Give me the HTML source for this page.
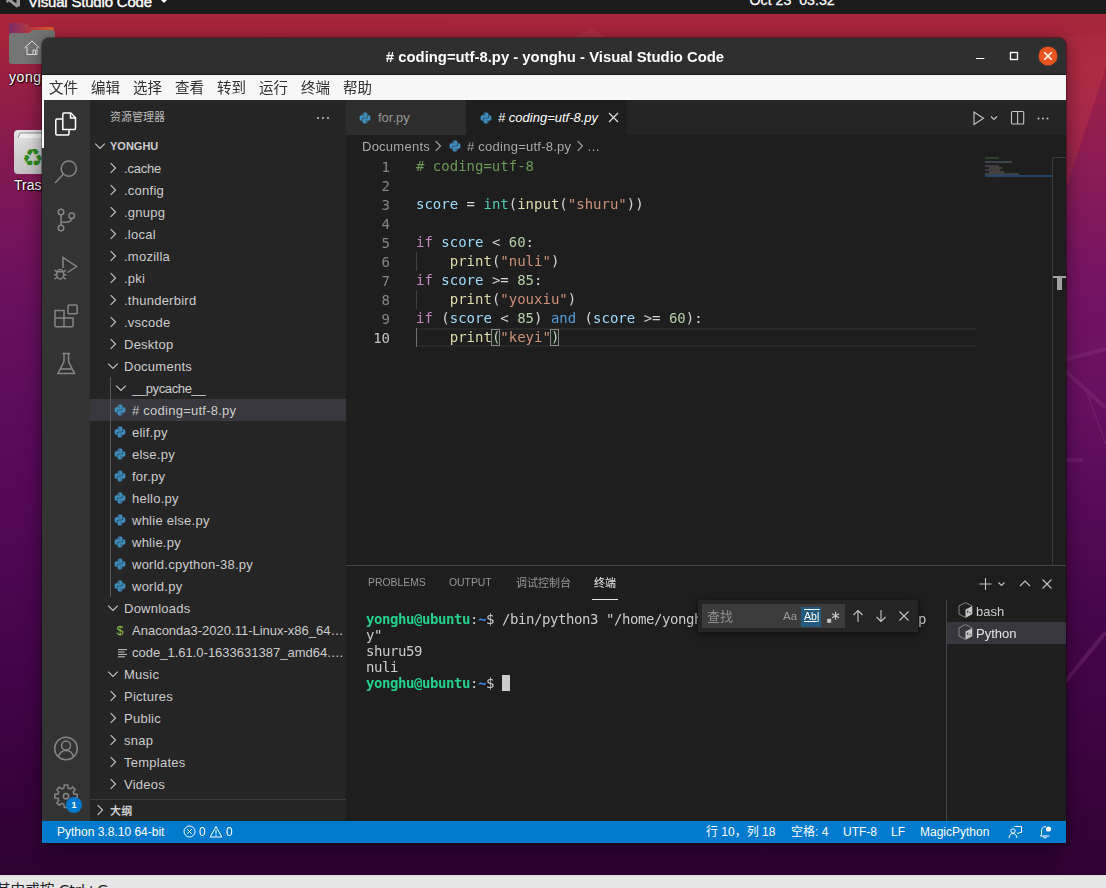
<!DOCTYPE html>
<html lang="zh-CN">
<head>
<meta charset="utf-8">
<title># coding=utf-8.py - yonghu - Visual Studio Code</title>
<style>
*{box-sizing:border-box;margin:0;padding:0}
html,body{width:1106px;height:888px;overflow:hidden}
body{position:relative;font-family:"Liberation Sans","Noto Sans CJK SC",sans-serif;font-size:13px;color:#ccc;background:#5a0f50}
.abs,.abs>*{position:absolute}
svg{display:block;overflow:visible}
#wall{left:0;top:0;width:1106px;height:888px}
#topbar{left:0;top:0;width:1106px;height:14px;background:#1b1b1b;color:#fff;overflow:hidden}
#topbar span{position:absolute;font-weight:normal;font-size:15px;line-height:18px;white-space:nowrap;letter-spacing:-.190px;-webkit-text-stroke:.350px #fff}
#botbar{left:0;top:875px;width:1106px;height:13px;background:#e6e6e7;border-top:1px solid #dcdcdc;overflow:hidden;color:#222}
#botbar span{position:absolute;left:-4px;top:4.500px;font-size:14.600px;line-height:18px;white-space:nowrap;font-family:"DejaVu Sans","Noto Sans CJK SC",sans-serif}
.dlabel{color:#fff;font-size:14px;line-height:18px;text-shadow:1px 1px 1px #000,0 0 2px #000;white-space:nowrap}
#win{left:42px;top:38px;width:1024px;height:805px;background:#1e1e1e;border-radius:7px 7px 0 0;overflow:hidden}
#winshadow{left:42px;top:38px;width:1024px;height:805px;border-radius:7px 7px 0 0;box-shadow:0 3px 18px rgba(0,0,0,.5),0 0 0 1px rgba(0,0,0,.3)}
#title{will-change:transform;left:0;top:0;width:1024px;height:37px;background:#302f30;color:#fff;font-weight:bold;font-size:14.850px;line-height:37px;text-align:center;border-bottom:1px solid #1a1a1a}
#title span{left:1px;width:1024px;top:1px;letter-spacing:0}
#menu{will-change:transform;left:0;top:37px;width:1024px;height:25px;background:#f7f7f7;color:#303030;font-size:14.500px;line-height:25px;white-space:nowrap}
#menu span{top:1px}
#act{left:0;top:62px;width:48px;height:721px;background:#333}
#side{left:48px;top:62px;width:256px;height:721px;background:#252526;overflow:hidden;white-space:nowrap}
.row{left:0;width:256px;height:22px;line-height:22px;color:#ccc;font-size:13px}
.row .t{top:1px;letter-spacing:.250px}
.row .chv{top:3px}
.row .pyi{top:5px}
.sel{background:#37373d}
#tabs{left:304px;top:62px;width:720px;height:35px;background:#252526;white-space:nowrap}
#crumbs{left:304px;top:97px;width:720px;height:22px;background:#1e1e1e;color:#a9a9a9;white-space:nowrap;line-height:22px;letter-spacing:.250px}
#editor{left:304px;top:119px;width:720px;height:408px;background:#1e1e1e;overflow:hidden}
.ln{left:0;width:44px;text-align:right;color:#858585;font:14px/19px "DejaVu Sans Mono","Liberation Mono",monospace}
.cl{left:70px;white-space:pre;color:#d4d4d4;font:14px/19px "DejaVu Sans Mono","Liberation Mono",monospace}
.k{color:#c586c0}.v{color:#9cdcfe}.f{color:#dcdcaa}.s{color:#ce9178}.n{color:#b5cea8}.c{color:#6a9955}.b{color:#569cd6}.ty{color:#4ec9b0}
#panel{left:304px;top:527px;width:720px;height:256px;background:#1e1e1e;border-top:1px solid #454545;overflow:hidden}
.pt{top:7px;font-size:11px;line-height:20px;color:#969696;white-space:nowrap}
.tl{left:20px;white-space:pre;color:#ccc;font:14px/16px "DejaVu Sans Mono","Liberation Mono",monospace;letter-spacing:-0.430px}
.tl b{color:#23d18b}.tl i{color:#3b8eea;font-style:normal;font-weight:bold}
#status{left:0;top:783px;width:1024px;height:22px;background:#007acc;color:#fff;font-size:12px;line-height:22px;white-space:nowrap}
#status span{top:0}
</style>
</head>
<body>
<svg id="wall" class="abs" viewBox="0 0 1106 888" width="1106" height="888">
<defs>
<linearGradient id="gl" x1="0" y1="0" x2="0" y2="1">
<stop offset="0" stop-color="#a8253a"/><stop offset=".04" stop-color="#a5243b"/><stop offset=".1" stop-color="#961e44"/><stop offset=".147" stop-color="#8a1b4c"/><stop offset=".242" stop-color="#78155a"/><stop offset=".355" stop-color="#66105e"/><stop offset=".507" stop-color="#590a5b"/><stop offset=".743" stop-color="#45044b"/><stop offset=".88" stop-color="#38023c"/><stop offset=".985" stop-color="#2c0230"/>
</linearGradient>
<linearGradient id="gr" x1="0" y1="0" x2="0" y2="1">
<stop offset=".016" stop-color="#a6263a"/><stop offset=".045" stop-color="#a8273c"/><stop offset=".075" stop-color="#9c2146"/><stop offset=".124" stop-color="#931e4e"/><stop offset=".18" stop-color="#8a1c56"/><stop offset=".236" stop-color="#80185c"/><stop offset=".293" stop-color="#761462"/><stop offset=".36" stop-color="#6f1264"/><stop offset=".45" stop-color="#661060"/><stop offset=".563" stop-color="#560b58"/><stop offset=".676" stop-color="#48064c"/><stop offset=".79" stop-color="#400444"/><stop offset=".9" stop-color="#38033a"/><stop offset=".985" stop-color="#2f0232"/>
</linearGradient>
<linearGradient id="gp" gradientUnits="userSpaceOnUse" x1="0" y1="40" x2="0" y2="190">
<stop offset="0" stop-color="#ab293e"/><stop offset=".2" stop-color="#ae2b44"/><stop offset=".5" stop-color="#a72949"/><stop offset="1" stop-color="#982350"/>
</linearGradient>
<linearGradient id="gt" x1="0" y1="0" x2="1" y2="0">
<stop offset="0" stop-color="#a8253a"/><stop offset="1" stop-color="#a8263b"/>
</linearGradient>
</defs>
<rect width="1106" height="888" fill="url(#gl)"/>
<rect x="0" y="0" width="1106" height="40" fill="url(#gt)"/>
<path d="M572 40 591 27 610 40z" fill="#b4384c" opacity=".45"/>
<rect x="1060" y="14" width="46" height="874" fill="url(#gr)"/>
<path d="M1060 36h46v31L1060 208z" fill="url(#gp)"/>
<g stroke="#8a3a86" stroke-opacity=".32" fill="none"><path d="M1060 361 1106 349" stroke-width="4"/><path d="M1060 366 1106 408" stroke-width="4"/><path d="M1085 388 1106 444" stroke-width="1.500"/><path d="M1060 460h23" stroke-width="4"/><path d="M1060 688 1106 632" stroke-width="4" stroke-opacity=".35"/></g>
</svg>
<div id="topbar" class="abs"><svg style="position:absolute;left:6px;top:-7px" width="15" height="15" viewBox="0 0 15 15"><path d="M10.500 0.500 14 2v11l-3.500 1.500L3 8.500 1.200 10 0.300 9.300V5.700L1.200 5 3 6.500zM10.500 4.500 6.200 7.500l4.300 3z" fill="#9a9a9a" fill-rule="evenodd"/></svg><span style="left:28px;top:-7px">Visual Studio Code</span><svg style="position:absolute;left:161px;top:0" width="6" height="3" viewBox="0 0 6 3"><path d="M0 0h6L3 3z" fill="#fff"/></svg><span style="left:749.500px;top:-9px;font-weight:normal;font-size:14.200px;letter-spacing:0;-webkit-text-stroke:.250px #fff;white-space:pre">Oct 23  03:32</span></div>
<div class="abs" id="desk" style="left:0;top:14px;width:60px;height:200px">
<svg style="left:9px;top:9px" width="46" height="42" viewBox="0 0 46 42">
<defs><linearGradient id="fg" x1="0" y1="0" x2="1" y2="0"><stop offset="0" stop-color="#7a2a6a"/><stop offset=".5" stop-color="#b8383c"/><stop offset="1" stop-color="#e2622a"/></linearGradient></defs>
<path d="M3 0h14l4 4h21a3 3 0 0 1 3 3v10H0V3a3 3 0 0 1 3-3z" fill="url(#fg)"/>
<path d="M3 10h17l4-3h19a3 3 0 0 1 3 3v28a3 3 0 0 1-3 3H3a3 3 0 0 1-3-3V13a3 3 0 0 1 3-3z" fill="#757575"/>
<path d="M15.500 25 23 18l7.500 7M18 24v7.500h10V24M24 31.500V27h2.500v4.500" fill="none" stroke="#e8e8e8" stroke-width="1"/>
</svg>
<span class="dlabel" style="left:9px;top:54px;letter-spacing:.550px">yonghu</span>
<svg style="left:14px;top:116px" width="30" height="44" viewBox="0 0 30 44">
<defs><linearGradient id="tg" x1="0" y1="0" x2="0" y2="1"><stop offset="0" stop-color="#e4e4e4"/><stop offset="1" stop-color="#c2c2c2"/></linearGradient></defs>
<rect x="0" y="0" width="44" height="44" rx="4" fill="url(#tg)"/>
<path d="M4 8 6 3h30v5" fill="#f4f4f4" stroke="#8c8c8c" stroke-width="1"/>
<text x="8" y="36" font-family="DejaVu Sans,sans-serif" font-size="24" fill="#2f8a22">♻</text>
</svg>
<span class="dlabel" style="left:14px;top:162px">Trash</span>
</div>
<div id="winshadow" class="abs"></div>
<div id="win" class="abs">
<div id="title" class="abs"><span># coding=utf-8.py - yonghu - Visual Studio Code</span>
<svg style="left:930px;top:8px" width="90" height="22" viewBox="0 0 90 22"><path d="M4 12.500h8.300" stroke="#fff" stroke-width="1" fill="none"/><rect x="38.500" y="6.500" width="7" height="7" fill="none" stroke="#fff" stroke-width="1.300"/><circle cx="76" cy="10" r="9.500" fill="#e95420"/><path d="M72.200 6.200l7.600 7.600M79.800 6.200l-7.600 7.600" stroke="#fff" stroke-width="1.600" fill="none"/></svg>
</div>
<div id="menu" class="abs">
<span style="left:7px">文件</span>
<span style="left:49px">编辑</span>
<span style="left:91px">选择</span>
<span style="left:133px">查看</span>
<span style="left:175px">转到</span>
<span style="left:217px">运行</span>
<span style="left:259px">终端</span>
<span style="left:301px">帮助</span>
</div>
<div id="act" class="abs">
<div style="left:0;top:0;width:2px;height:48px;background:#fff"></div>
<svg style="left:12px;top:12px" width="24" height="24" viewBox="0 0 24 24" fill="none" stroke="#fff" stroke-width="1.500"><path d="M8.800 17.500V2.200A1.200 1.200 0 0 1 10 1h6.800l4.700 4.700v10.600a1.200 1.200 0 0 1-1.200 1.200z"/><path d="M16.500 1.200V6h4.800"/><path d="M8.800 7H3A1.200 1.200 0 0 0 1.800 8.200v13.600A1.200 1.200 0 0 0 3 23h10.800a1.200 1.200 0 0 0 1.200-1.200V17.500"/></svg>
<svg style="left:12px;top:60px" width="24" height="24" viewBox="0 0 24 24" fill="none" stroke="#858585" stroke-width="1.500"><circle cx="14.800" cy="8.700" r="7.600"/><path d="M9.500 14 1 23"/></svg>
<svg style="left:12px;top:108px" width="24" height="24" viewBox="0 0 24 24" fill="none" stroke="#858585" stroke-width="1.500"><circle cx="7" cy="4" r="2.800"/><circle cx="7" cy="20" r="2.800"/><circle cx="17.700" cy="7.800" r="2.800"/><path d="M7 6.800v10.400M17.700 10.600c0 3.500-4 3.600-10.700 3.600"/></svg>
<svg style="left:12px;top:156px" width="24" height="24" viewBox="0 0 24 24" fill="none" stroke="#858585" stroke-width="1.500"><path d="M9 12V1.500L22.500 10.500 13.500 16.500"/><ellipse cx="6.200" cy="18.200" rx="3.500" ry="4.700"/><path d="M2.900 15.800H9.500M.500 14.200l2.400 1.600M11.900 14.200l-2.400 1.600M0 18.700h2.700M12.400 18.700H9.700M.500 23.200l2.600-1.800M11.900 23.200l-2.600-1.800"/></svg>
<svg style="left:12px;top:204px" width="24" height="24" viewBox="0 0 24 24" fill="none" stroke="#858585" stroke-width="1.500"><path d="M1 6.500h9V14h9v7.500a1.200 1.200 0 0 1-1.200 1.200H2.200A1.200 1.200 0 0 1 1 21.500z"/><path d="M1 14h9M10 14v8.700"/><rect x="14" y="1" width="9.200" height="8.700" rx="1.200"/></svg>
<svg style="left:12px;top:252px" width="24" height="24" viewBox="0 0 24 24" fill="none" stroke="#858585" stroke-width="1.500"><path d="M8.500 1.500h7.500M10 1.500v8L4 21.500h16.500L14.500 9.500v-8M6.200 17h12"/></svg>
<svg style="left:12px;top:636px" width="24" height="24" viewBox="0 0 24 24" fill="none" stroke="#858585" stroke-width="1.500"><circle cx="12" cy="12.500" r="11.300"/><circle cx="12" cy="9.500" r="4.500"/><path d="M4.500 21c1-4.500 4-6.500 7.500-6.500s6.500 2 7.500 6.500"/></svg>
<svg style="left:12px;top:684px" width="24" height="24" viewBox="0 0 24 24" fill="none" stroke="#858585" stroke-width="1.500"><path d="M10.300 1h3.400l.5 3.200 1.900.8 2.600-1.900 2.400 2.400-1.900 2.600.8 1.900 3.200.5v3.400l-3.200.5-.8 1.900 1.900 2.600-2.400 2.400-2.600-1.900-1.900.8-.5 3.200h-3.400l-.5-3.200-1.900-.8-2.600 1.900-2.400-2.400 1.900-2.600-.8-1.900L.8 13.900v-3.400l3.200-.5.8-1.900-1.900-2.600 2.400-2.400 2.600 1.900 1.900-.8z"/><circle cx="12" cy="12.200" r="2.600"/></svg>
<div style="left:24px;top:697px;width:16px;height:16px;border-radius:8px;background:#007acc;color:#fff;font-size:9px;font-weight:bold;line-height:16px;text-align:center">1</div>
</div>
<div id="side" class="abs">
<span style="left:20px;top:8px;font-size:11px;line-height:18px;color:#bbb">资源管理器</span>
<svg style="left:226px;top:16px" width="14" height="4" viewBox="0 0 14 4"><circle cx="2" cy="2" r="1" fill="#c5c5c5"/><circle cx="7" cy="2" r="1" fill="#c5c5c5"/><circle cx="12" cy="2" r="1" fill="#c5c5c5"/></svg>
<div class="row abs" style="top:35px"><svg style="left:2px" class="chv" viewBox="0 0 16 16" width="16" height="16"><path d="M3.200 5.700 8 10.500l4.800-4.800" fill="none" stroke="#c5c5c5" stroke-width="1.100"/></svg><span class="t" style="left:20px;font-size:11px;font-weight:bold;color:#ccc;letter-spacing:0;top:0">YONGHU</span></div>
<div class="row abs" style="top:57px"><svg style="left:15px" class="chv" viewBox="0 0 16 16" width="16" height="16"><path d="M5.7 3.2 10.500 8l-4.800 4.800" fill="none" stroke="#c5c5c5" stroke-width="1.100"/></svg><span class="t" style="left:34px;letter-spacing:-.200px">.cache</span></div>
<div class="row abs" style="top:79px"><svg style="left:15px" class="chv" viewBox="0 0 16 16" width="16" height="16"><path d="M5.7 3.2 10.500 8l-4.800 4.800" fill="none" stroke="#c5c5c5" stroke-width="1.100"/></svg><span class="t" style="left:34px">.config</span></div>
<div class="row abs" style="top:101px"><svg style="left:15px" class="chv" viewBox="0 0 16 16" width="16" height="16"><path d="M5.7 3.2 10.500 8l-4.800 4.800" fill="none" stroke="#c5c5c5" stroke-width="1.100"/></svg><span class="t" style="left:34px">.gnupg</span></div>
<div class="row abs" style="top:123px"><svg style="left:15px" class="chv" viewBox="0 0 16 16" width="16" height="16"><path d="M5.7 3.2 10.500 8l-4.800 4.800" fill="none" stroke="#c5c5c5" stroke-width="1.100"/></svg><span class="t" style="left:34px">.local</span></div>
<div class="row abs" style="top:145px"><svg style="left:15px" class="chv" viewBox="0 0 16 16" width="16" height="16"><path d="M5.7 3.2 10.500 8l-4.800 4.800" fill="none" stroke="#c5c5c5" stroke-width="1.100"/></svg><span class="t" style="left:34px">.mozilla</span></div>
<div class="row abs" style="top:167px"><svg style="left:15px" class="chv" viewBox="0 0 16 16" width="16" height="16"><path d="M5.7 3.2 10.500 8l-4.800 4.800" fill="none" stroke="#c5c5c5" stroke-width="1.100"/></svg><span class="t" style="left:34px">.pki</span></div>
<div class="row abs" style="top:189px"><svg style="left:15px" class="chv" viewBox="0 0 16 16" width="16" height="16"><path d="M5.7 3.2 10.500 8l-4.800 4.800" fill="none" stroke="#c5c5c5" stroke-width="1.100"/></svg><span class="t" style="left:34px">.thunderbird</span></div>
<div class="row abs" style="top:211px"><svg style="left:15px" class="chv" viewBox="0 0 16 16" width="16" height="16"><path d="M5.7 3.2 10.500 8l-4.800 4.800" fill="none" stroke="#c5c5c5" stroke-width="1.100"/></svg><span class="t" style="left:34px">.vscode</span></div>
<div class="row abs" style="top:233px"><svg style="left:15px" class="chv" viewBox="0 0 16 16" width="16" height="16"><path d="M5.7 3.2 10.500 8l-4.800 4.800" fill="none" stroke="#c5c5c5" stroke-width="1.100"/></svg><span class="t" style="left:34px">Desktop</span></div>
<div class="row abs" style="top:255px"><svg style="left:15px" class="chv" viewBox="0 0 16 16" width="16" height="16"><path d="M3.200 5.700 8 10.500l4.800-4.800" fill="none" stroke="#c5c5c5" stroke-width="1.100"/></svg><span class="t" style="left:34px">Documents</span></div>
<div class="row abs" style="top:277px"><svg style="left:23px" class="chv" viewBox="0 0 16 16" width="16" height="16"><path d="M3.200 5.700 8 10.500l4.800-4.800" fill="none" stroke="#c5c5c5" stroke-width="1.100"/></svg><span class="t" style="left:42px;letter-spacing:-.370px">__pycache__</span></div>
<div class="row abs sel" style="top:299px"><svg style="left:23.600px" class="pyi" viewBox="0 0 12 12" width="12" height="12" fill="#3f8dbd"><path d="M3.500 2.900V2.200Q3.500 .600 5.100 .600H6.900Q8.500 .600 8.500 2.200V4.600Q8.500 5.800 7.300 5.800H4.300Q3.100 5.800 3.100 7V8.700H2.200Q.600 8.700 .600 7.100V4.900Q.600 3.300 2.200 3.300H6V2.900Z"/><path transform="rotate(180 6 6)" d="M3.500 2.900V2.200Q3.500 .600 5.100 .600H6.900Q8.500 .600 8.500 2.200V4.600Q8.500 5.800 7.300 5.800H4.300Q3.100 5.800 3.100 7V8.700H2.200Q.600 8.700 .600 7.100V4.900Q.600 3.300 2.200 3.300H6V2.900Z"/><circle cx="4.800" cy="1.900" r=".550" fill="#252526"/><circle cx="7.200" cy="10.100" r=".550" fill="#252526"/></svg><span class="t" style="left:42px"># coding=utf-8.py</span></div>
<div class="row abs" style="top:321px"><svg style="left:23.600px" class="pyi" viewBox="0 0 12 12" width="12" height="12" fill="#3f8dbd"><path d="M3.500 2.900V2.200Q3.500 .600 5.100 .600H6.900Q8.500 .600 8.500 2.200V4.600Q8.500 5.800 7.300 5.800H4.300Q3.100 5.800 3.100 7V8.700H2.200Q.600 8.700 .600 7.100V4.900Q.600 3.300 2.200 3.300H6V2.900Z"/><path transform="rotate(180 6 6)" d="M3.500 2.900V2.200Q3.500 .600 5.100 .600H6.900Q8.500 .600 8.500 2.200V4.600Q8.500 5.800 7.300 5.800H4.300Q3.100 5.800 3.100 7V8.700H2.200Q.600 8.700 .600 7.100V4.900Q.600 3.300 2.200 3.300H6V2.900Z"/><circle cx="4.800" cy="1.900" r=".550" fill="#252526"/><circle cx="7.200" cy="10.100" r=".550" fill="#252526"/></svg><span class="t" style="left:42px">elif.py</span></div>
<div class="row abs" style="top:343px"><svg style="left:23.600px" class="pyi" viewBox="0 0 12 12" width="12" height="12" fill="#3f8dbd"><path d="M3.500 2.900V2.200Q3.500 .600 5.100 .600H6.900Q8.500 .600 8.500 2.200V4.600Q8.500 5.800 7.300 5.800H4.300Q3.100 5.800 3.100 7V8.700H2.200Q.600 8.700 .600 7.100V4.900Q.600 3.300 2.200 3.300H6V2.900Z"/><path transform="rotate(180 6 6)" d="M3.500 2.900V2.200Q3.500 .600 5.100 .600H6.900Q8.500 .600 8.500 2.200V4.600Q8.500 5.800 7.300 5.800H4.300Q3.100 5.800 3.100 7V8.700H2.200Q.600 8.700 .600 7.100V4.900Q.600 3.300 2.200 3.300H6V2.900Z"/><circle cx="4.800" cy="1.900" r=".550" fill="#252526"/><circle cx="7.200" cy="10.100" r=".550" fill="#252526"/></svg><span class="t" style="left:42px">else.py</span></div>
<div class="row abs" style="top:365px"><svg style="left:23.600px" class="pyi" viewBox="0 0 12 12" width="12" height="12" fill="#3f8dbd"><path d="M3.500 2.900V2.200Q3.500 .600 5.100 .600H6.900Q8.500 .600 8.500 2.200V4.600Q8.500 5.800 7.300 5.800H4.300Q3.100 5.800 3.100 7V8.700H2.200Q.600 8.700 .600 7.100V4.900Q.600 3.300 2.200 3.300H6V2.900Z"/><path transform="rotate(180 6 6)" d="M3.500 2.900V2.200Q3.500 .600 5.100 .600H6.900Q8.500 .600 8.500 2.200V4.600Q8.500 5.800 7.300 5.800H4.300Q3.100 5.800 3.100 7V8.700H2.200Q.600 8.700 .600 7.100V4.900Q.600 3.300 2.200 3.300H6V2.900Z"/><circle cx="4.800" cy="1.900" r=".550" fill="#252526"/><circle cx="7.200" cy="10.100" r=".550" fill="#252526"/></svg><span class="t" style="left:42px">for.py</span></div>
<div class="row abs" style="top:387px"><svg style="left:23.600px" class="pyi" viewBox="0 0 12 12" width="12" height="12" fill="#3f8dbd"><path d="M3.500 2.900V2.200Q3.500 .600 5.100 .600H6.900Q8.500 .600 8.500 2.200V4.600Q8.500 5.800 7.300 5.800H4.300Q3.100 5.800 3.100 7V8.700H2.200Q.600 8.700 .600 7.100V4.900Q.600 3.300 2.200 3.300H6V2.900Z"/><path transform="rotate(180 6 6)" d="M3.500 2.900V2.200Q3.500 .600 5.100 .600H6.900Q8.500 .600 8.500 2.200V4.600Q8.500 5.800 7.300 5.800H4.300Q3.100 5.800 3.100 7V8.700H2.200Q.600 8.700 .600 7.100V4.900Q.600 3.300 2.200 3.300H6V2.900Z"/><circle cx="4.800" cy="1.900" r=".550" fill="#252526"/><circle cx="7.200" cy="10.100" r=".550" fill="#252526"/></svg><span class="t" style="left:42px">hello.py</span></div>
<div class="row abs" style="top:409px"><svg style="left:23.600px" class="pyi" viewBox="0 0 12 12" width="12" height="12" fill="#3f8dbd"><path d="M3.500 2.900V2.200Q3.500 .600 5.100 .600H6.900Q8.500 .600 8.500 2.200V4.600Q8.500 5.800 7.300 5.800H4.300Q3.100 5.800 3.100 7V8.700H2.200Q.600 8.700 .600 7.100V4.900Q.600 3.300 2.200 3.300H6V2.900Z"/><path transform="rotate(180 6 6)" d="M3.500 2.900V2.200Q3.500 .600 5.100 .600H6.900Q8.500 .600 8.500 2.200V4.600Q8.500 5.800 7.300 5.800H4.300Q3.100 5.800 3.100 7V8.700H2.200Q.600 8.700 .600 7.100V4.900Q.600 3.300 2.200 3.300H6V2.900Z"/><circle cx="4.800" cy="1.900" r=".550" fill="#252526"/><circle cx="7.200" cy="10.100" r=".550" fill="#252526"/></svg><span class="t" style="left:42px">whlie else.py</span></div>
<div class="row abs" style="top:431px"><svg style="left:23.600px" class="pyi" viewBox="0 0 12 12" width="12" height="12" fill="#3f8dbd"><path d="M3.500 2.900V2.200Q3.500 .600 5.100 .600H6.900Q8.500 .600 8.500 2.200V4.600Q8.500 5.800 7.300 5.800H4.300Q3.100 5.800 3.100 7V8.700H2.200Q.600 8.700 .600 7.100V4.900Q.600 3.300 2.200 3.300H6V2.900Z"/><path transform="rotate(180 6 6)" d="M3.500 2.900V2.200Q3.500 .600 5.100 .600H6.900Q8.500 .600 8.500 2.200V4.600Q8.500 5.800 7.300 5.800H4.300Q3.100 5.800 3.100 7V8.700H2.200Q.600 8.700 .600 7.100V4.900Q.600 3.300 2.200 3.300H6V2.900Z"/><circle cx="4.800" cy="1.900" r=".550" fill="#252526"/><circle cx="7.200" cy="10.100" r=".550" fill="#252526"/></svg><span class="t" style="left:42px">whlie.py</span></div>
<div class="row abs" style="top:453px"><svg style="left:23.600px" class="pyi" viewBox="0 0 12 12" width="12" height="12" fill="#3f8dbd"><path d="M3.500 2.900V2.200Q3.500 .600 5.100 .600H6.900Q8.500 .600 8.500 2.200V4.600Q8.500 5.800 7.300 5.800H4.300Q3.100 5.800 3.100 7V8.700H2.200Q.600 8.700 .600 7.100V4.900Q.600 3.300 2.200 3.300H6V2.900Z"/><path transform="rotate(180 6 6)" d="M3.500 2.900V2.200Q3.500 .600 5.100 .600H6.900Q8.500 .600 8.500 2.200V4.600Q8.500 5.800 7.300 5.800H4.300Q3.100 5.800 3.100 7V8.700H2.200Q.600 8.700 .600 7.100V4.900Q.600 3.300 2.200 3.300H6V2.900Z"/><circle cx="4.800" cy="1.900" r=".550" fill="#252526"/><circle cx="7.200" cy="10.100" r=".550" fill="#252526"/></svg><span class="t" style="left:42px">world.cpython-38.py</span></div>
<div class="row abs" style="top:475px"><svg style="left:23.600px" class="pyi" viewBox="0 0 12 12" width="12" height="12" fill="#3f8dbd"><path d="M3.500 2.900V2.200Q3.500 .600 5.100 .600H6.900Q8.500 .600 8.500 2.200V4.600Q8.500 5.800 7.300 5.800H4.300Q3.100 5.800 3.100 7V8.700H2.200Q.600 8.700 .600 7.100V4.900Q.600 3.300 2.200 3.300H6V2.900Z"/><path transform="rotate(180 6 6)" d="M3.500 2.900V2.200Q3.500 .600 5.100 .600H6.900Q8.500 .600 8.500 2.200V4.600Q8.500 5.800 7.300 5.800H4.300Q3.100 5.800 3.100 7V8.700H2.200Q.600 8.700 .600 7.100V4.900Q.600 3.300 2.200 3.300H6V2.900Z"/><circle cx="4.800" cy="1.900" r=".550" fill="#252526"/><circle cx="7.200" cy="10.100" r=".550" fill="#252526"/></svg><span class="t" style="left:42px">world.py</span></div>
<div class="row abs" style="top:497px"><svg style="left:15px" class="chv" viewBox="0 0 16 16" width="16" height="16"><path d="M3.200 5.700 8 10.500l4.800-4.800" fill="none" stroke="#c5c5c5" stroke-width="1.100"/></svg><span class="t" style="left:34px">Downloads</span></div>
<div class="row abs" style="top:519px"><span class="t" style="left:26.500px;color:#8dc149;font-size:12.500px;letter-spacing:0">$</span><span class="t" style="left:42px;letter-spacing:0">Anaconda3-2020.11-Linux-x86_64…</span></div>
<div class="row abs" style="top:541px"><svg style="left:27.500px;top:8px" width="9" height="9" viewBox="0 0 9 9"><path d="M0 .600h9M0 3h6.500M0 5.400h9M0 7.800h7" stroke="#c5c5c5" stroke-width="1" fill="none"/></svg><span class="t" style="left:42px;letter-spacing:0">code_1.61.0-1633631387_amd64.…</span></div>
<div class="row abs" style="top:563px"><svg style="left:15px" class="chv" viewBox="0 0 16 16" width="16" height="16"><path d="M3.200 5.700 8 10.500l4.800-4.800" fill="none" stroke="#c5c5c5" stroke-width="1.100"/></svg><span class="t" style="left:34px">Music</span></div>
<div class="row abs" style="top:585px"><svg style="left:15px" class="chv" viewBox="0 0 16 16" width="16" height="16"><path d="M5.7 3.2 10.500 8l-4.800 4.800" fill="none" stroke="#c5c5c5" stroke-width="1.100"/></svg><span class="t" style="left:34px">Pictures</span></div>
<div class="row abs" style="top:607px"><svg style="left:15px" class="chv" viewBox="0 0 16 16" width="16" height="16"><path d="M5.7 3.2 10.500 8l-4.800 4.800" fill="none" stroke="#c5c5c5" stroke-width="1.100"/></svg><span class="t" style="left:34px">Public</span></div>
<div class="row abs" style="top:629px"><svg style="left:15px" class="chv" viewBox="0 0 16 16" width="16" height="16"><path d="M5.7 3.2 10.500 8l-4.800 4.800" fill="none" stroke="#c5c5c5" stroke-width="1.100"/></svg><span class="t" style="left:34px">snap</span></div>
<div class="row abs" style="top:651px"><svg style="left:15px" class="chv" viewBox="0 0 16 16" width="16" height="16"><path d="M5.7 3.2 10.500 8l-4.800 4.800" fill="none" stroke="#c5c5c5" stroke-width="1.100"/></svg><span class="t" style="left:34px">Templates</span></div>
<div class="row abs" style="top:673px"><svg style="left:15px" class="chv" viewBox="0 0 16 16" width="16" height="16"><path d="M5.7 3.2 10.500 8l-4.800 4.800" fill="none" stroke="#c5c5c5" stroke-width="1.100"/></svg><span class="t" style="left:34px">Videos</span></div>
<div style="left:20px;top:277px;width:1px;height:220px;background:#585858"></div>
<div style="left:0;top:699px;width:256px;height:1px;background:#3c3c3c"></div>
<div class="row abs" style="top:699px"><svg style="left:2px" class="chv" viewBox="0 0 16 16" width="16" height="16"><path d="M5.7 3.2 10.500 8l-4.800 4.800" fill="none" stroke="#c5c5c5" stroke-width="1.100"/></svg><span class="t" style="left:20px;font-size:11px;font-weight:bold;color:#ccc">大纲</span></div>
</div>
<div id="tabs" class="abs">
<div class="abs" style="left:0;top:0;width:120px;height:35px;background:#2d2d2d;line-height:35px;color:#969696"><svg style="left:13px;top:12px" class="pyi" viewBox="0 0 12 12" width="12" height="12" fill="#3f8dbd"><path d="M3.500 2.900V2.200Q3.500 .600 5.100 .600H6.900Q8.500 .600 8.500 2.200V4.600Q8.500 5.800 7.300 5.800H4.300Q3.100 5.800 3.100 7V8.700H2.200Q.600 8.700 .600 7.100V4.900Q.600 3.300 2.200 3.300H6V2.900Z"/><path transform="rotate(180 6 6)" d="M3.500 2.900V2.200Q3.500 .600 5.100 .600H6.900Q8.500 .600 8.500 2.200V4.600Q8.500 5.800 7.300 5.800H4.300Q3.100 5.800 3.100 7V8.700H2.200Q.600 8.700 .600 7.100V4.900Q.600 3.300 2.200 3.300H6V2.900Z"/><circle cx="4.800" cy="1.900" r=".550" fill="#252526"/><circle cx="7.200" cy="10.100" r=".550" fill="#252526"/></svg><span style="left:32px;top:0">for.py</span></div>
<div class="abs" style="left:120px;top:0;width:161px;height:35px;background:#1e1e1e;line-height:35px;color:#fff"><svg style="left:14px;top:12px" class="pyi" viewBox="0 0 12 12" width="12" height="12" fill="#3f8dbd"><path d="M3.500 2.900V2.200Q3.500 .600 5.100 .600H6.900Q8.500 .600 8.500 2.200V4.600Q8.500 5.800 7.300 5.800H4.300Q3.100 5.800 3.100 7V8.700H2.200Q.600 8.700 .600 7.100V4.900Q.600 3.300 2.200 3.300H6V2.900Z"/><path transform="rotate(180 6 6)" d="M3.500 2.900V2.200Q3.500 .600 5.100 .600H6.900Q8.500 .600 8.500 2.200V4.600Q8.500 5.800 7.300 5.800H4.300Q3.100 5.800 3.100 7V8.700H2.200Q.600 8.700 .600 7.100V4.900Q.600 3.300 2.200 3.300H6V2.900Z"/><circle cx="4.800" cy="1.900" r=".550" fill="#252526"/><circle cx="7.200" cy="10.100" r=".550" fill="#252526"/></svg><span style="left:32px;top:0;font-style:italic"># coding=utf-8.py</span><svg style="left:142px;top:12px" width="11" height="11" viewBox="0 0 11 11"><path d="M1 1l9 9M10 1l-9 9" stroke="#e0e0e0" stroke-width="1.200" fill="none"/></svg></div>
<svg style="left:622px;top:9px" width="90" height="18" viewBox="0 0 90 18" fill="none" stroke="#c5c5c5" stroke-width="1.100"><path d="M6 3v12.400l9.500-6.200z"/><path d="M23 7.500l3 3 3-3"/><rect x="43.500" y="2.500" width="12.200" height="12.500" rx="1"/><path d="M49.600 2.500v12.500"/><g fill="#c5c5c5" stroke="none"><circle cx="70.500" cy="9.500" r="1"/><circle cx="75" cy="9.500" r="1"/><circle cx="79.500" cy="9.500" r="1"/></g></svg>
</div>
<div id="crumbs" class="abs">
<span style="left:16px;top:1px">Documents</span>
<svg style="left:84px;top:3px" class="chv" viewBox="0 0 16 16" width="16" height="16"><path d="M5.7 3.2 10.500 8l-4.800 4.800" fill="none" stroke="#a9a9a9" stroke-width="1.100"/></svg>
<svg style="left:103px;top:5px" class="pyi" viewBox="0 0 12 12" width="12" height="12" fill="#3f8dbd"><path d="M3.500 2.900V2.200Q3.500 .600 5.100 .600H6.900Q8.500 .600 8.500 2.200V4.600Q8.500 5.800 7.300 5.800H4.300Q3.100 5.800 3.100 7V8.700H2.200Q.600 8.700 .600 7.100V4.900Q.600 3.300 2.200 3.300H6V2.900Z"/><path transform="rotate(180 6 6)" d="M3.500 2.900V2.200Q3.500 .600 5.100 .600H6.900Q8.500 .600 8.500 2.200V4.600Q8.500 5.800 7.300 5.800H4.300Q3.100 5.800 3.100 7V8.700H2.200Q.600 8.700 .600 7.100V4.900Q.600 3.300 2.200 3.300H6V2.900Z"/><circle cx="4.800" cy="1.900" r=".550" fill="#252526"/><circle cx="7.200" cy="10.100" r=".550" fill="#252526"/></svg>
<span style="left:121px;top:1px"># coding=utf-8.py</span>
<svg style="left:226px;top:3px" class="chv" viewBox="0 0 16 16" width="16" height="16"><path d="M5.7 3.2 10.500 8l-4.800 4.800" fill="none" stroke="#a9a9a9" stroke-width="1.100"/></svg>
<span style="left:241px;top:1px">…</span>
</div>
<div id="editor" class="abs">
<div style="left:70px;top:171px;width:561px;height:19px;border-top:2px solid #282828;border-bottom:2px solid #282828"></div>
<div class="ln" style="top:1px">1</div>
<div class="cl" style="top:0px"><span class="c"># coding=utf-8</span></div>
<div class="ln" style="top:20px">2</div>
<div class="ln" style="top:39px">3</div>
<div class="cl" style="top:38px"><span class="v">score</span> = <span class="ty">int</span>(<span class="f">input</span>(<span class="s">"shuru"</span>))</div>
<div class="ln" style="top:58px">4</div>
<div class="ln" style="top:77px">5</div>
<div class="cl" style="top:76px"><span class="k">if</span> <span class="v">score</span> &lt; <span class="n">60</span>:</div>
<div class="ln" style="top:96px">6</div>
<div class="cl" style="top:95px">    <span class="f">print</span>(<span class="s">"nuli"</span>)</div>
<div class="ln" style="top:115px">7</div>
<div class="cl" style="top:114px"><span class="k">if</span> <span class="v">score</span> &gt;= <span class="n">85</span>:</div>
<div class="ln" style="top:134px">8</div>
<div class="cl" style="top:133px">    <span class="f">print</span>(<span class="s">"youxiu"</span>)</div>
<div class="ln" style="top:153px">9</div>
<div class="cl" style="top:152px"><span class="k">if</span> (<span class="v">score</span> &lt; <span class="n">85</span>) <span class="b">and</span> (<span class="v">score</span> &gt;= <span class="n">60</span>):</div>
<div class="ln" style="top:172px;color:#c6c6c6">10</div>
<div class="cl" style="top:171px">    <span class="f">print</span>(<span class="s">"keyi"</span>)</div>
<div style="left:70px;top:95px;width:1px;height:19px;background:#404040"></div>
<div style="left:70px;top:133px;width:1px;height:19px;background:#404040"></div>
<div style="left:70px;top:171px;width:1px;height:19px;background:#707070"></div>
<div style="left:145px;top:172px;width:9px;height:17px;border:1px solid #888;background:rgba(0,100,0,.1)"></div>
<div style="left:204px;top:172px;width:9px;height:17px;border:1px solid #888;background:rgba(0,100,0,.1)"></div>
<svg style="left:639px;top:0" width="67" height="24" viewBox="0 0 67 24"><rect x="0" y="0.5" width="14" height="1" fill="#6a9955" opacity=".55"/><rect x="0" y="4.5" width="27" height="1" fill="#8fb0c0" opacity=".55"/><rect x="0" y="8.5" width="14" height="1" fill="#9a86a8" opacity=".55"/><rect x="4" y="10.5" width="13" height="1" fill="#b0a080" opacity=".55"/><rect x="0" y="12.5" width="15" height="1" fill="#9a86a8" opacity=".55"/><rect x="4" y="14.5" width="15" height="1" fill="#b0a080" opacity=".55"/><rect x="0" y="16.5" width="34" height="1" fill="#8f9fb8" opacity=".55"/><rect x="4" y="18.5" width="13" height="1" fill="#b0a080" opacity=".55"/><rect x="0" y="18" width="67" height="2" fill="#234a70" opacity=".9"/></svg>
<div style="left:706px;top:0;width:14px;height:408px;border-left:1px solid #3a3a3a;border-top:1px solid #3a3a3a"></div>
<svg style="left:707px;top:119px" width="13" height="14" viewBox="0 0 13 14"><path d="M0 0h13v2H9v12H4V2H0z" fill="#a2a2a2"/></svg>
</div>
<div id="panel" class="abs">
<span class="pt" style="left:22px;font-size:10.400px">PROBLEMS</span><span class="pt" style="left:103px;font-size:10.400px">OUTPUT</span><span class="pt" style="left:170px">调试控制台</span><span class="pt" style="left:248px;color:#e7e7e7">终端</span>
<div style="left:246px;top:33px;width:26px;height:1px;background:#e7e7e7"></div>
<svg style="left:630px;top:8.500px" width="82" height="18" viewBox="0 0 82 18" fill="none" stroke="#c5c5c5" stroke-width="1.100"><path d="M9.500 3v12M3.500 9h12"/><path d="M22.500 7.500l3 3 3-3"/><path d="M44 11l5-5 5 5"/><path d="M66.500 4.500l9 9M75.500 4.500l-9 9"/></svg>
<div class="tl" style="top:45px"><b>yonghu@ubuntu</b>:<i>~</i>$ /bin/python3 "/home/yonghu/Documents/# coding=utf-8.p</div>
<div class="tl" style="top:61px">y"</div>
<div class="tl" style="top:77px">shuru59</div>
<div class="tl" style="top:93px">nuli</div>
<div class="tl" style="top:109px"><b>yonghu@ubuntu</b>:<i>~</i>$ </div>
<div style="left:156px;top:109px;width:8px;height:16px;background:#cccccc"></div>
<div style="left:600px;top:34px;width:1px;height:222px;background:#444"></div>
<div class="abs" style="left:601px;top:34px;width:119px;height:22px;line-height:22px;color:#ccc"><svg style="left:10.500px;top:1.500px" width="16" height="16" viewBox="0 0 16 16" fill="none" stroke="#8e8e8e" stroke-width=".900"><path d="M7.500 .600 14 3.900v8.200L7.500 15.400 1 12.100V3.900z"/><path d="M7.500 7.600 14 4.300V12.100L7.500 15.400z" fill="#c8c8c8" stroke="none"/><path d="M10.300 8.500 9 9.400l1.300 .7-1.300 1M11.300 10.600h1.500" stroke="#333" stroke-width=".800"/></svg><span style="left:29px;top:1px">bash</span></div>
<div class="abs" style="left:601px;top:56px;width:119px;height:22px;line-height:22px;color:#e4e4e4;background:#37373d"><svg style="left:10.500px;top:1.500px" width="16" height="16" viewBox="0 0 16 16" fill="none" stroke="#8e8e8e" stroke-width=".900"><path d="M7.500 .600 14 3.900v8.200L7.500 15.400 1 12.100V3.900z"/><path d="M7.500 7.600 14 4.300V12.100L7.500 15.400z" fill="#c8c8c8" stroke="none"/><path d="M10.300 8.500 9 9.400l1.300 .7-1.300 1M11.300 10.600h1.500" stroke="#333" stroke-width=".800"/></svg><span style="left:29px;top:1px">Python</span></div>
<div class="abs" style="left:352px;top:34px;width:220px;height:32px;background:#252526;box-shadow:0 2px 8px rgba(0,0,0,.6)">
<div class="abs" style="left:4px;top:4px;width:143px;height:24px;background:#3c3c3c"><span style="left:5px;top:0;line-height:25px;color:#8f8f8f;font-size:13px">查找</span>
<span style="left:81px;top:0;line-height:25px;color:#9d9d9d;font-size:11.500px">Aa</span>
<div style="left:99px;top:3px;width:20px;height:20px;background:#245a80"></div><span style="left:102px;top:0;line-height:25px;color:#fff;font-size:10.500px;text-decoration:underline overline">Ab|</span>
<svg style="left:124px;top:4px" width="18" height="16" viewBox="0 0 18 16"><rect x="1.200" y="10.800" width="4" height="4" fill="#c5c5c5"/><path d="M9.600 3.800v8M6.100 5.800l7 4M13.100 5.800l-7 4" stroke="#c5c5c5" stroke-width="1.200" fill="none"/></svg></div>
<svg style="left:153px;top:8px" width="62" height="16" viewBox="0 0 62 16" fill="none" stroke="#c5c5c5" stroke-width="1.100"><path d="M7 14V2.500M2.500 7 7 2.500 11.500 7"/><path d="M30 2v11.500M25.500 9 30 13.500 34.500 9"/><path d="M48.500 3.500l9 9M57.500 3.500l-9 9"/></svg>
</div>
</div>
<div id="status" class="abs">
<span style="left:15px">Python 3.8.10 64-bit</span>
<svg style="left:141px;top:4px" width="13" height="13" viewBox="0 0 13 13" fill="none" stroke="#fff" stroke-width="1"><circle cx="6.500" cy="6.500" r="5.500"/><path d="M4.300 4.300l4.400 4.400M8.700 4.300 4.300 8.700"/></svg>
<span style="left:157px">0</span>
<svg style="left:167px;top:4px" width="14" height="13" viewBox="0 0 14 13" fill="none" stroke="#fff" stroke-width="1"><path d="M7 1.500 12.800 12H1.200z"/><path d="M7 5v4M7 10v1.200"/></svg>
<span style="left:184px">0</span>
<span style="left:664px">行 10，列 18</span><span style="left:749px">空格: 4</span><span style="left:801px">UTF-8</span><span style="left:849px">LF</span><span style="left:878px">MagicPython</span>
<svg style="left:966px;top:4px" width="14" height="14" viewBox="0 0 14 14" fill="none" stroke="#fff" stroke-width="1"><circle cx="5" cy="6" r="2.200"/><path d="M1 13c.3-3 2-4.500 4-4.500s3.700 1.500 4 4.500M6.500 1.500h7v6h-2l-1.500 1.500V7.500"/></svg>
<svg style="left:996px;top:4px" width="14" height="14" viewBox="0 0 14 14" fill="none" stroke="#fff" stroke-width="1"><path d="M8 1.500C5 1.500 3.500 3.500 3.500 6v3.500L2.500 11h9M5.500 11.500a1.500 1.500 0 0 0 3 0"/><circle cx="10.500" cy="4" r="2.600" fill="#fff" stroke="none"/></svg>
</div>
</div>
<div id="botbar" class="abs"><span>其中或按 Ctrl+G。</span></div>
</body>
</html>
